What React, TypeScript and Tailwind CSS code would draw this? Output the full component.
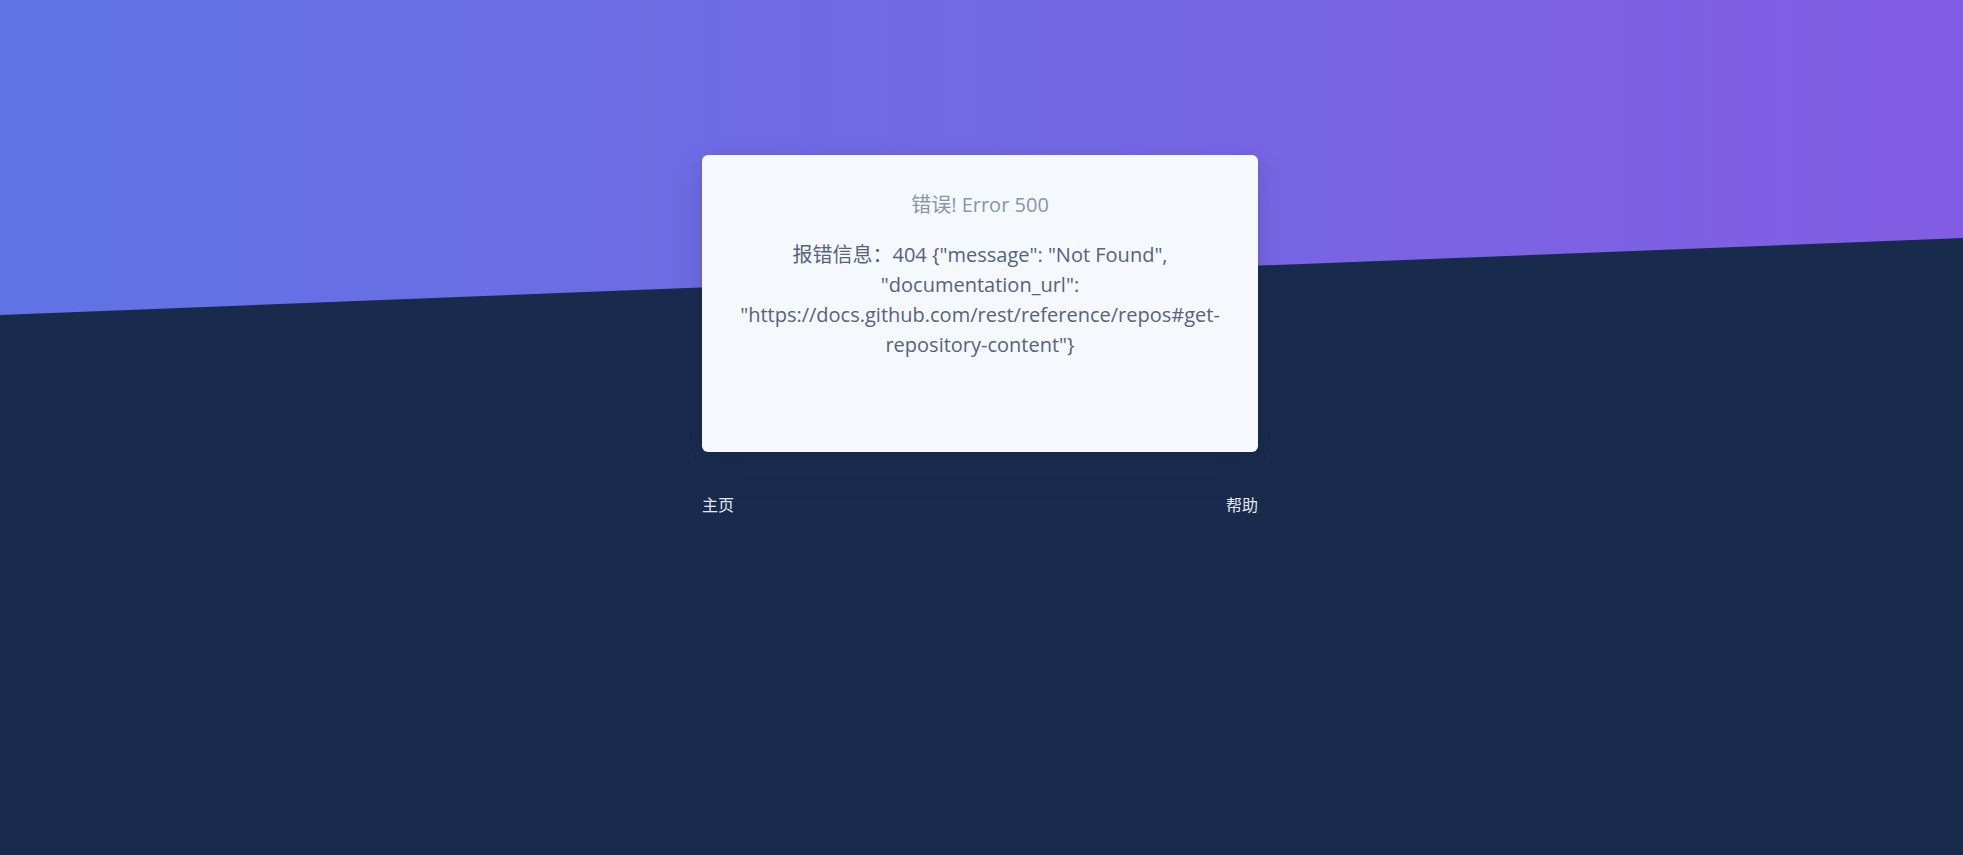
import React from "react";

export default function App() {
  return (
    <div
      className="relative min-h-screen w-full overflow-hidden bg-[#182b4d]"
      style={{ fontFamily: '"Open Sans", "Noto Sans CJK SC", sans-serif' }}
    >
      <div className="absolute inset-x-0 top-0 h-[320px] bg-gradient-to-r from-[#5f73e4] to-[#825de3] [clip-path:polygon(0_0,100%_0,100%_238px,0_315px)]" />
      <div className="relative flex justify-center pr-[3px] pt-[155px]">
        <div className="w-[556px]">
          <div className="rounded-md bg-[#f5f8fc] px-9 pt-[35px] pb-[92px] text-center shadow-[0_15px_35px_rgba(50,50,93,0.12),0_5px_15px_rgba(0,0,0,0.08)]">
            <h1 className="text-[20px] leading-[30px] font-normal text-[#8796aa]">错误! Error 500</h1>
            <p className="mt-[20px] text-[20px] leading-[30px] text-[#56637e] break-words">
              报错信息：404 {'{"message": "Not Found", "documentation_url": "https://docs.github.com/rest/reference/repos#get-repository-content"}'}
            </p>
          </div>
          <div className="mt-[41px] flex justify-between text-[16px] leading-[24px] text-[#e2e8f0]">
            <a href="#">主页</a>
            <a href="#">帮助</a>
          </div>
        </div>
      </div>
    </div>
  );
}
